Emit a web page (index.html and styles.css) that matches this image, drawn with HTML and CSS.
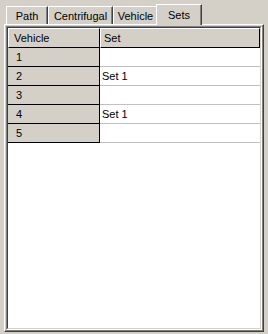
FILE: index.html
```html
<!DOCTYPE html>
<html>
<head>
    <title>Sets</title>
    <link rel="stylesheet" href="styles.css">
</head>
<body>
    <div class="tabctl">
        <div class="tabbar">
            <div class="tab t-path">Path</div>
            <div class="tab t-cent">Centrifugal</div>
            <div class="tab t-veh">Vehicle</div>
            <div class="tab t-sets active">Sets</div>
        </div>
        <div class="panel">
            <div class="listview">
                <div class="lv-inner">
                    <table class="grid">
                        <thead>
                            <tr>
                                <th class="h-rh">Vehicle</th>
                                <th class="h-val">Set</th>
                            </tr>
                        </thead>
                        <tbody>
                            <tr><td class="rh">1</td><td class="val"></td></tr>
                            <tr><td class="rh">2</td><td class="val">Set 1</td></tr>
                            <tr><td class="rh">3</td><td class="val"></td></tr>
                            <tr><td class="rh">4</td><td class="val">Set 1</td></tr>
                            <tr><td class="rh">5</td><td class="val"></td></tr>
                        </tbody>
                    </table>
                </div>
            </div>
        </div>
    </div>
</body>
</html>
```

FILE: styles.css
```css
body { margin: 0; width: 268px; height: 334px; overflow: hidden; background: #d4d0c8; color: #000; font: 11px "Liberation Sans", Arial, sans-serif; }

/* tab strip */
.tabctl { padding: 4px 0 0 4px; width: 260px; }
.tabbar { display: flex; align-items: flex-end; height: 20px; padding-left: 2px; }
.tab { position: relative; box-sizing: border-box; height: 18px; padding-top: 1px; line-height: 16px; text-align: center; border-top: 1px solid #fff; border-left: 1px solid #fff; border-right: 1px solid #404040; box-shadow: inset -1px 0 #808080; }
.t-path { width: 42px; }
.t-cent { width: 65px; }
.t-veh { width: 45px; }
.t-sets { width: 42px; }
.tab.active { z-index: 2; width: 46px; height: 21px; margin: 0 -2px -1px -2px; padding-top: 2px; background: #d4d0c8; }

/* page */
.panel { box-sizing: border-box; height: 308px; padding: 1px; border-top: 1px solid #fff; border-left: 1px solid #fff; border-right: 1px solid #404040; border-bottom: 1px solid #404040; box-shadow: inset -1px -1px #808080; }
.listview { box-sizing: border-box; height: 304px; border-top: 1px solid #808080; border-left: 1px solid #808080; border-right: 1px solid #fff; border-bottom: 1px solid #fff; }
.lv-inner { box-sizing: border-box; height: 302px; background: #fff; border-top: 1px solid #404040; border-left: 1px solid #404040; border-right: 1px solid #d4d0c8; border-bottom: 1px solid #d4d0c8; }

/* grid */
.grid { border-collapse: separate; border-spacing: 0; width: 252px; table-layout: fixed; }
.grid th, .grid td { padding: 0; height: 18px; line-height: 18px; text-align: left; font-weight: normal; white-space: nowrap; }
.grid th { background: #d4d0c8; border-top: 1px solid #fff; border-left: 1px solid #fff; border-right: 1px solid #000; border-bottom: 1px solid #000; }
.h-rh { width: 85px; padding-left: 5px !important; }
.h-val { padding-left: 3px !important; }
.rh { background: #d4d0c8; padding-left: 8px !important; border-right: 1px solid #000; border-bottom: 1px solid #000; }
.val { padding-left: 2px !important; border-bottom: 1px solid #c0c0c0; }
```
